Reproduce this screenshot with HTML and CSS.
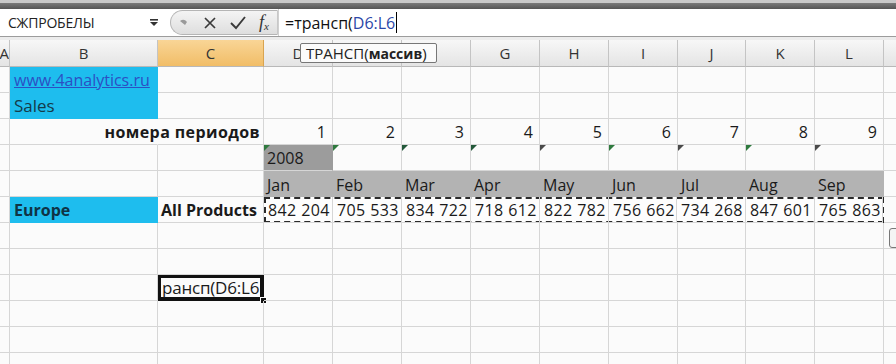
FILE: index.html
```html
<html>
<head>
<meta http-equiv="Content-Type" content="text/html; charset=UTF-8">
<link rel="stylesheet" href="styles.css">
</head>
<body>
<div class="app">
<div class="ribbon-edge"></div>

<div class="formula-bar">
    <div class="name-box">
        <span>СЖПРОБЕЛЫ</span>
        <svg class="drop" width="10" height="10" viewBox="0 0 10 10"><rect x="1" y="1" width="8" height="1.6" fill="#333"/><path d="M1 4 L9 4 L5 8 Z" fill="#333"/></svg>
    </div>
    <div class="fx-buttons">
        <svg width="14" height="14" viewBox="0 0 14 14"><path d="M3 5 Q7 2 10 6 L8 9 Z" fill="#9a9a9a"/></svg>
        <svg width="16" height="16" viewBox="0 0 16 16"><path d="M3 3 L13 13 M13 3 L3 13" stroke="#3a3a3a" stroke-width="1.7" fill="none"/></svg>
        <svg width="18" height="16" viewBox="0 0 18 16"><path d="M2 8 L7 13 L16 2" stroke="#3a3a3a" stroke-width="1.9" fill="none"/></svg>
        <span class="fx"><i>f</i><sub>x</sub></span>
    </div>
    <div class="formula-input">
        <span>=трансп(</span><span class="ref">D6:L6</span><span class="caret"></span>
    </div>
</div>
<div class="bar-gap"></div>

<div class="sheet">
    <div class="row head">
        <div class="cell cut">A</div><div class="cell">B</div><div class="cell sel">C</div>
        <div class="cell">D</div><div class="cell"></div><div class="cell"></div><div class="cell">G</div>
        <div class="cell">H</div><div class="cell">I</div><div class="cell">J</div><div class="cell">K</div>
        <div class="cell">L</div><div class="cell"></div>
    </div>
    <div class="row">
        <div class="cell"></div><div class="cell cyan"><a class="link" href="#">www.4analytics.ru</a></div><div class="cell"></div>
        <div class="cell"></div><div class="cell"></div><div class="cell"></div><div class="cell"></div><div class="cell"></div>
        <div class="cell"></div><div class="cell"></div><div class="cell"></div><div class="cell"></div><div class="cell"></div>
    </div>
    <div class="row">
        <div class="cell"></div><div class="cell cyan sales">Sales</div><div class="cell"></div>
        <div class="cell"></div><div class="cell"></div><div class="cell"></div><div class="cell"></div><div class="cell"></div>
        <div class="cell"></div><div class="cell"></div><div class="cell"></div><div class="cell"></div><div class="cell"></div>
    </div>
    <div class="row">
        <div class="cell"></div><div class="cell noline"></div><div class="cell num bold overflow"><span>номера периодов</span></div>
        <div class="cell num">1</div><div class="cell num">2</div><div class="cell num">3</div><div class="cell num">4</div><div class="cell num">5</div>
        <div class="cell num">6</div><div class="cell num">7</div><div class="cell num">8</div><div class="cell num">9</div><div class="cell"></div>
    </div>
    <div class="row">
        <div class="cell"></div><div class="cell"></div><div class="cell"></div>
        <div class="cell flag dark-fill">2008</div><div class="cell flag"></div><div class="cell flag dk"></div><div class="cell flag dk"></div><div class="cell flag gray"></div>
        <div class="cell flag"></div><div class="cell flag gray"></div><div class="cell flag"></div><div class="cell flag gray"></div><div class="cell"></div>
    </div>
    <div class="row">
        <div class="cell"></div><div class="cell"></div><div class="cell"></div>
        <div class="cell month">Jan</div><div class="cell month">Feb</div><div class="cell month">Mar</div><div class="cell month">Apr</div><div class="cell month">May</div>
        <div class="cell month">Jun</div><div class="cell month">Jul</div><div class="cell month">Aug</div><div class="cell month">Sep</div><div class="cell"></div>
    </div>
    <div class="row">
        <div class="cell"></div><div class="cell cyan bold europe">Europe</div><div class="cell bold">All Products</div>
        <div class="ants">
            <div class="cell val">842 204</div><div class="cell val">705 533</div><div class="cell val">834 722</div>
            <div class="cell val">718 612</div><div class="cell val">822 782</div><div class="cell val">756 662</div>
            <div class="cell val">734 268</div><div class="cell val">847 601</div><div class="cell val">765 863</div>
        </div>
        <div class="cell"></div>
    </div>
    <div class="row">
        <div class="cell"></div><div class="cell"></div><div class="cell"></div>
        <div class="cell"></div><div class="cell"></div><div class="cell"></div><div class="cell"></div><div class="cell"></div>
        <div class="cell"></div><div class="cell"></div><div class="cell"></div><div class="cell"></div><div class="cell"><span class="paste-tag"></span></div>
    </div>
    <div class="row">
        <div class="cell"></div><div class="cell"></div><div class="cell"></div>
        <div class="cell"></div><div class="cell"></div><div class="cell"></div><div class="cell"></div><div class="cell"></div>
        <div class="cell"></div><div class="cell"></div><div class="cell"></div><div class="cell"></div><div class="cell"></div>
    </div>
    <div class="row">
        <div class="cell"></div><div class="cell"></div><div class="cell active">рансп(D6:L6</div>
        <div class="cell"></div><div class="cell"></div><div class="cell"></div><div class="cell"></div><div class="cell"></div>
        <div class="cell"></div><div class="cell"></div><div class="cell"></div><div class="cell"></div><div class="cell"></div>
    </div>
    <div class="row">
        <div class="cell"></div><div class="cell"></div><div class="cell"></div>
        <div class="cell"></div><div class="cell"></div><div class="cell"></div><div class="cell"></div><div class="cell"></div>
        <div class="cell"></div><div class="cell"></div><div class="cell"></div><div class="cell"></div><div class="cell"></div>
    </div>
    <div class="row">
        <div class="cell"></div><div class="cell"></div><div class="cell"></div>
        <div class="cell"></div><div class="cell"></div><div class="cell"></div><div class="cell"></div><div class="cell"></div>
        <div class="cell"></div><div class="cell"></div><div class="cell"></div><div class="cell"></div><div class="cell"></div>
    </div>
    <div class="row">
        <div class="cell"></div><div class="cell"></div><div class="cell"></div>
        <div class="cell"></div><div class="cell"></div><div class="cell"></div><div class="cell"></div><div class="cell"></div>
        <div class="cell"></div><div class="cell"></div><div class="cell"></div><div class="cell"></div><div class="cell"></div>
    </div>
</div>

<div class="tooltip">ТРАНСП(<b>массив</b>)</div>
</div>
</body>
</html>
```

FILE: styles.css
```css
body {
    margin: 0;
    background: #fbfbfb;
    font-family: "Open Sans", "DejaVu Sans", sans-serif;
    overflow: hidden;
}

.app {
    position: relative;
    width: 896px;
    height: 364px;
    overflow: hidden;
}

/* top edge of the ribbon */
.ribbon-edge {
    height: 9px;
    background: linear-gradient(#c9c9c9 0, #c9c9c9 3px, #7a7a7a 3px, #555 9px);
}

/* formula bar */
.formula-bar {
    display: flex;
    height: 27px;
    background: #fff;
    border-bottom: 1px solid #9c9c9c;
}

.name-box {
    width: 165px;
    display: flex;
    align-items: center;
    justify-content: space-between;
    padding: 0 6px 0 8px;
    box-sizing: border-box;
    font-size: 14px;
    color: #222;
    letter-spacing: -0.2px;
}
.name-box .drop {
    margin-top: 1px;
}

.fx-buttons {
    width: 108px;
    margin: 1px 0 1px 5px;
    display: flex;
    align-items: center;
    gap: 11px;
    padding-left: 6px;
    box-sizing: border-box;
    border: 1px solid #b5b5b5;
    border-right-color: #c8c8c8;
    border-radius: 14px 0 0 14px;
    background: linear-gradient(#f4f4f4, #dedede);
}
.fx {
    font-family: "Liberation Serif", serif;
    font-size: 18px;
    color: #333;
    margin-left: 1px;
}
.fx sub {
    font-size: 11px;
    font-style: italic;
    vertical-align: -2px;
}

.formula-input {
    flex: 1;
    display: flex;
    align-items: center;
    padding-left: 6px;
    border-left: 1px solid #d0d0d0;
    font-size: 16px;
    color: #111;
}
.formula-input .ref {
    color: #2b47a8;
}
.caret {
    width: 1px;
    height: 21px;
    background: #000;
    margin-left: 1px;
}

.bar-gap {
    height: 3px;
    background: #ececec;
}

/* grid */
.row {
    display: grid;
    grid-template-columns: 10px 148px 106px 69px 69px 69px 69px 69px 69px 68px 69px 69px 68px 1fr;
    height: 26px;
}
.cell {
    position: relative;
    box-sizing: border-box;
    border-right: 1px solid #d6d6d6;
    border-bottom: 1px solid #d6d6d6;
    font-size: 16px;
    color: #1a1a1a;
    display: flex;
    align-items: center;
    padding: 0 3px;
    white-space: nowrap;
}

.row.head {
    height: 27px;
}
.head .cell {
    justify-content: center;
    background: linear-gradient(#f7f7f7, #e4e4e4);
    border-right-color: #c4c4c4;
    border-bottom-color: #b8b8b8;
    color: #333;
    font-size: 15px;
}
.head .cell.sel {
    background: linear-gradient(#f9d596, #f1bd67);
    border-right-color: #d9a450;
}
.head .cell.cut {
    justify-content: flex-end;
    padding: 0;
    overflow: hidden;
    text-indent: -4px;
}

.cyan {
    background: #1ebdee;
    border-right-color: #1ebdee;
    border-bottom-color: #1ebdee;
}
.link {
    color: #2c4fc4;
    font-size: 16px;
    margin-left: 1px;
}
.sales {
    color: #143b4a;
    font-size: 17px;
    padding-left: 4px;
}
.europe {
    color: #0f3345;
    padding-left: 4px;
}
.bold {
    font-weight: 700;
}

.num {
    justify-content: flex-end;
    padding-right: 6px;
}
.noline {
    border-right-color: transparent;
}
.overflow {
    overflow: visible;
    padding-right: 3px;
}
.overflow span {
    margin-left: -80px;
    letter-spacing: 0.4px;
}

/* "number stored as text" flags */
.flag::before {
    content: "";
    position: absolute;
    left: 0;
    top: 0;
    border-top: 6px solid #2f7a3e;
    border-right: 6px solid transparent;
}
.flag.dk::before {
    border-top-color: #23593a;
}
.flag.gray::before {
    border-top-color: #4a4a4a;
}
.dark-fill {
    background: #9c9c9c;
    border-right-color: #9c9c9c;
}
.month {
    background: #b3b3b3;
    border-right-color: #b3b3b3;
    border-bottom-color: #b3b3b3;
    padding-top: 3px;
}

/* copied range D6:L6 */
.ants {
    grid-column: 4 / 13;
    display: grid;
    grid-template-columns: 69px 69px 69px 69px 69px 68px 69px 69px 68px;
    outline: 2px dashed #2a2a2a;
    outline-offset: -2px;
    background: #fdfdfd;
}
.val {
    padding-left: 4px;
    letter-spacing: 0.4px;
}

.active {
    box-shadow: inset 0 0 0 3px #111;
    border-color: #111;
    padding-left: 4px;
    font-size: 17px;
    letter-spacing: -0.2px;
}
.active::after {
    content: "";
    position: absolute;
    right: -4px;
    bottom: -4px;
    width: 5px;
    height: 5px;
    background: #111;
    border: 1px solid #fff;
}

.paste-tag {
    position: absolute;
    left: 5px;
    top: 5px;
    width: 14px;
    height: 18px;
    border: 1px solid #777;
    border-radius: 3px;
    background: #f4f4f4;
}

/* function hint */
.tooltip {
    position: absolute;
    left: 300px;
    top: 43px;
    width: 137px;
    height: 20px;
    box-sizing: border-box;
    padding: 0 0 0 5px;
    display: flex;
    align-items: center;
    background: #fbfbfb;
    border: 1px solid #777;
    border-radius: 2px;
    font-size: 15px;
    color: #222;
}
.tooltip b {
    font-size: 14px;
}
```
